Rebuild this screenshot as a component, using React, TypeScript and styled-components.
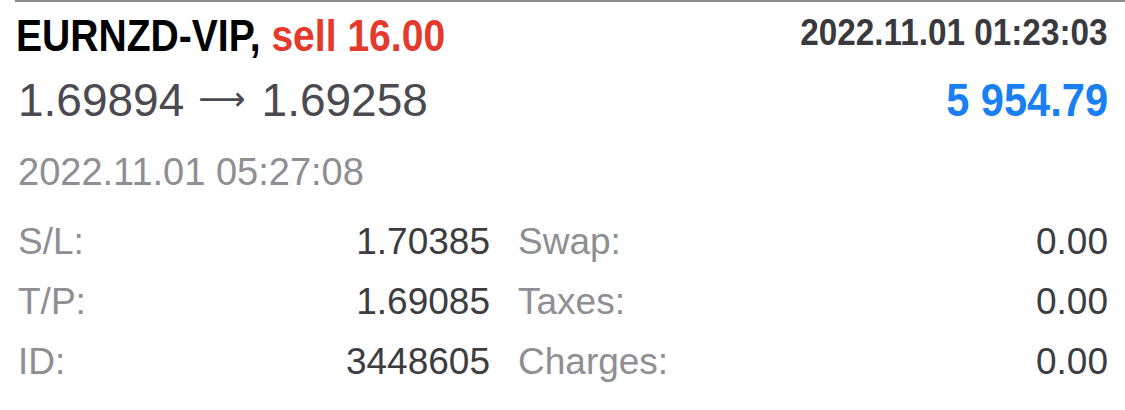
import styled, { createGlobalStyle } from "styled-components";

const GlobalStyle = createGlobalStyle`
  html, body {
    margin: 0;
    padding: 0;
    background: #ffffff;
  }
  body {
    font-family: "Liberation Sans", Arial, sans-serif;
  }
`;

const Card = styled.div`
  width: 1125px;
  height: 410px;
  box-sizing: border-box;
  padding: 0 17px 0 18px;
  background: #ffffff;
  overflow: hidden;

  &::before {
    content: "";
    display: block;
    height: 2px;
    margin-left: -3px;
    margin-right: -17px;
    background: #8c8c8c;
  }
`;

const HeadRow = styled.div`
  display: flex;
  justify-content: space-between;
  align-items: flex-start;
  margin-top: 4px;
  height: 60px;
`;

// condensed bold look: no narrow face installed, so squeeze the bold one
const Symbol = styled.div`
  display: inline-block;
  font-weight: 700;
  font-size: 45px;
  line-height: 60px;
  color: #000000;
  white-space: nowrap;
  transform: scaleX(0.868);
  transform-origin: left center;
  margin-left: -2px;

  > .side {
    color: #e4392b;
  }
`;

const OpenTime = styled.div`
  display: inline-block;
  font-weight: 700;
  font-size: 37px;
  line-height: 53px;
  color: #3a3a3e;
  white-space: nowrap;
  transform: scaleX(0.9);
  transform-origin: right center;
`;

const PriceRow = styled.div`
  display: flex;
  justify-content: space-between;
  align-items: baseline;
  height: 66px;
  line-height: 66px;
`;

const Prices = styled.div`
  font-size: 46px;
  color: #4a4a50;
  white-space: nowrap;

  > .arrow {
    font-family: "DejaVu Sans", sans-serif;
    font-size: 33px;
    vertical-align: 6px;
    margin: 0 16px 0 14px;
  }
`;

const Profit = styled.div`
  display: inline-block;
  font-weight: 700;
  font-size: 46px;
  color: #1a7ff2;
  white-space: nowrap;
  transform: scaleX(0.904);
  transform-origin: right center;
`;

const CloseTime = styled.div`
  font-size: 38px;
  line-height: 80px;
  height: 80px;
  color: #8e8e93;
`;

const DetailGrid = styled.div`
  display: grid;
  grid-template-columns: 472px 1fr;
  column-gap: 28px;
`;

const DetailCell = styled.div`
  display: flex;
  justify-content: space-between;
  font-size: 37px;
  line-height: 60px;
  height: 60px;

  > .label {
    color: #8e8e93;
  }

  > .value {
    color: #3c3c41;
  }
`;

const details = [
  ["S/L:", "1.70385", "Swap:", "0.00"],
  ["T/P:", "1.69085", "Taxes:", "0.00"],
  ["ID:", "3448605", "Charges:", "0.00"],
];

function App() {
  return (
    <>
      <GlobalStyle />
      <Card>
        <HeadRow>
          <Symbol>
            EURNZD-VIP, <span className='side'>sell 16.00</span>
          </Symbol>
          <OpenTime>2022.11.01 01:23:03</OpenTime>
        </HeadRow>
        <PriceRow>
          <Prices>
            1.69894<span className='arrow'>⟶</span>1.69258
          </Prices>
          <Profit>5 954.79</Profit>
        </PriceRow>
        <CloseTime>2022.11.01 05:27:08</CloseTime>
        <DetailGrid>
          {details.flatMap((row) => [
            <DetailCell key={row[0]}>
              <span className='label'>{row[0]}</span>
              <span className='value'>{row[1]}</span>
            </DetailCell>,
            <DetailCell key={row[2]}>
              <span className='label'>{row[2]}</span>
              <span className='value'>{row[3]}</span>
            </DetailCell>,
          ])}
        </DetailGrid>
      </Card>
    </>
  );
}

export default App;
